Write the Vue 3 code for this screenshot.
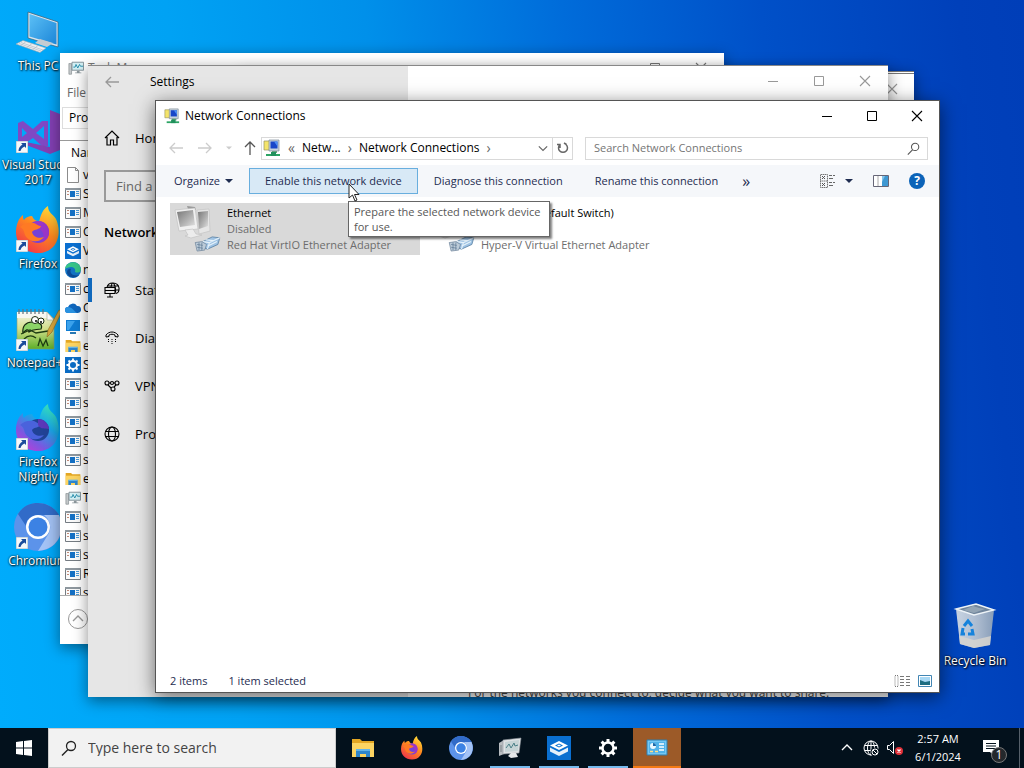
<template>
  <div class="screen">
    <svg class="sprite" aria-hidden="true">
      <defs>
        <linearGradient id="fire" x1="0.8" y1="0" x2="0.2" y2="1">
          <stop offset="0" stop-color="#ffe03a" />
          <stop offset="0.45" stop-color="#ff8a1e" />
          <stop offset="1" stop-color="#f0304c" />
        </linearGradient>
        <linearGradient id="night" x1="0.9" y1="0" x2="0.2" y2="1">
          <stop offset="0" stop-color="#3ff0b0" />
          <stop offset="0.4" stop-color="#18a8e8" />
          <stop offset="0.75" stop-color="#7a58e0" />
          <stop offset="1" stop-color="#c03cd8" />
        </linearGradient>
        <linearGradient id="glass" x1="0" y1="0" x2="1" y2="1">
          <stop offset="0" stop-color="#5cc0f6" />
          <stop offset="1" stop-color="#1c86d8" />
        </linearGradient>
        <linearGradient id="bin" x1="0" y1="0" x2="1" y2="0">
          <stop offset="0" stop-color="#d4dde6" />
          <stop offset="0.6" stop-color="#b2bfce" />
          <stop offset="1" stop-color="#8fa2b8" />
        </linearGradient>
        <linearGradient id="grass" x1="0" y1="0" x2="0" y2="1">
          <stop offset="0" stop-color="#f4f4ea" />
          <stop offset="0.45" stop-color="#d4e08c" />
          <stop offset="1" stop-color="#5cae28" />
        </linearGradient>
        <linearGradient id="greyscreen" x1="0" y1="0" x2="1" y2="1">
          <stop offset="0" stop-color="#777" />
          <stop offset="0.6" stop-color="#b4b4b4" />
          <stop offset="1" stop-color="#e2e2e2" />
        </linearGradient>
      </defs>

      <symbol id="i-pc" viewBox="0 0 48 48">
        <path d="M14 4 44 14v25L14 30z" fill="#d6e4ee" />
        <path d="M14 4 44 14v25L14 30z" fill="none" stroke="#3d5b70" stroke-width=".7" />
        <path d="M15.500 6 42.500 15v21.500L15.500 28.500z" fill="url(#glass)" />
        <path d="M26 31l13 4-6 4-12-4z" fill="#c4ccd2" />
        <path d="M9 32.500 32 40l-6 4.500L2 36z" fill="#eceff2" stroke="#9aa6ae" stroke-width=".6" />
        <path d="M7 34.500l22 7.500M5 35.500l22 7.500M12 33.500l-5 4M18 35.500l-5 4M24 37.500l-5 4" stroke="#b4bcc4" stroke-width=".7" />
      </symbol>
      <symbol id="i-vs" viewBox="0 0 48 48">
        <path d="M4 16l5-2 10 8 9-8h6v25h-6l-9-8-10 7-5-2zm4 5v9l5-4zm14 5 8 6V19z" fill="#7f49c4" />
        <path d="M36 3l10 4v36l-10 4-24-9v-3l24 5z" fill="#8340b4" />
      </symbol>
      <symbol id="i-firefox" viewBox="0 0 48 48">
        <path d="M24 47C11 47 2 38 2 26 2 18 5 12 9 9c0 2 0 4 1 5 2-3 5-4 8-4 1 1 1 3 3 4l4 2c2-8 4-13 9-16 0 7 5 8 8 13 7 16 0 34-18 34z" fill="url(#fire)" />
        <circle cx="24" cy="26" r="11" fill="#7442d8" />
        <path d="M24 15c7 0 11 5 11 11s-3 9-8 10c4-5 3-11-2-13-4-1-6 2-10 0 2-5 5-8 9-8z" fill="#9a36c8" />
        <path d="M6 21c4-4 9-5 14-4 3 1 4 3 7 3-1 4-7 3-9 6 1 5 7 7 12 5-4 6-15 6-19-2-1-3-1-6-5-8z" fill="#ff7a24" />
      </symbol>
      <symbol id="i-nightly" viewBox="0 0 48 48">
        <path d="M24 47C11 47 2 38 2 26 2 18 5 12 9 9c0 2 0 4 1 5 2-3 5-4 8-4 1 1 1 3 3 4l4 2c2-8 4-13 9-16 0 7 5 8 8 13 7 16 0 34-18 34z" fill="url(#night)" />
        <circle cx="24" cy="26" r="11" fill="#214296" />
        <path d="M6 21c4-4 9-5 14-4 3 1 4 3 7 3-1 4-7 3-9 6 1 5 7 7 12 5-4 6-15 6-19-2-1-3-1-6-5-8z" fill="#4a62dc" />
        <path d="M24 15c6 0 11 5 11 10-4-1-8 1-11-4z" fill="#5a38b8" />
      </symbol>
      <symbol id="i-npp" viewBox="0 0 48 48">
        <path d="M3 7h30l7 7v30H3z" fill="url(#grass)" stroke="#8a9a78" stroke-width=".6" />
        <path d="M3 7h30l1 6H3z" fill="#f8f8f2" />
        <path d="M5 4v5M9 4v5M13 4v5M17 4v5M21 4v5M25 4v5M29 4v5" stroke="#66707a" stroke-width="1.200" />
        <path d="M33 7v8h7z" fill="#fff" stroke="#a0a890" stroke-width=".6" />
        <path d="M9 28c-1-7 3-11 9-11 8 0 11 3 9 7-6 1-8 0-12 3-1-4-3-2-6 1z" fill="#8cd468" stroke="#182a10" stroke-width="1.200" />
        <circle cx="21" cy="15" r="3.500" fill="#fff" stroke="#182a10" />
        <circle cx="27" cy="16" r="3" fill="#fff" stroke="#182a10" />
        <circle cx="22" cy="16" r="1" /><circle cx="27" cy="17" r="1" />
        <path d="M7 29l9-4 6 3 12-2M10 34c4-4 8-4 12-1M24 41l2-7 3 7 3-6 2 6" fill="none" stroke="#1d3b12" stroke-width="1.300" />
        <path d="M48 6 38 27l-5 5 1-7L45 5z" fill="#d8a83c" stroke="#8c6a20" stroke-width=".6" />
      </symbol>
      <symbol id="i-chromium" viewBox="0 0 48 48">
        <circle cx="24" cy="24" r="24" fill="#5c93ea" />
        <path d="M24 0c9 0 17 5 21 12H24C17 12 12 17 12 23L4 11C8 4 15 0 24 0z" fill="#316bc8" />
        <path d="M45 12c6 14 1 34-21 36l11-18c3-7 0-14-5-18z" fill="#a4c3f6" />
        <circle cx="24" cy="24" r="12" fill="#fff" />
        <circle cx="24" cy="24" r="9.500" fill="#3c82e4" />
      </symbol>
      <symbol id="i-shortcut" viewBox="0 0 12 12">
        <path d="M0 0h12v12H0z" fill="#f4f8fa" stroke="#a8b8c0" />
        <path d="M5 2h5v5L8.500 5.500C6 7 5 8 4.500 10H2.500C2.500 7 4 5 6.500 3.500z" fill="#1a4c9c" />
      </symbol>
      <symbol id="i-bin" viewBox="0 0 48 48">
        <path d="M5 8 25 3l18 6-4 35-16 3-14-4z" fill="url(#bin)" opacity=".95" />
        <path d="M5 8 25 3l18 6-20 5z" fill="#70859c" stroke="#eef4f8" stroke-width="1.400" />
        <path d="M12 9l10-4 6 2 6 1-11 4z" fill="#93a4b4" />
        <path d="M8 35l15 4 17-4-1 9-16 3-14-4z" fill="#d8d6d0" opacity=".8" />
        <path d="M13 25l4-5 4 5M21 28l1 5h-5M14 33h-3l1-6" fill="none" stroke="#1683dc" stroke-width="3" />
      </symbol>

      <symbol id="i-app" viewBox="0 0 16 16">
        <path d="M.5 2.500h15v11H.5z" fill="#fafafa" stroke="#747b82" />
        <path d="M0 2h16v2H0z" fill="#8e979e" />
        <path d="M2 5h2v1H2zM2 8h2v1H2z" fill="#c08a78" />
        <path d="M5 5h5v6H5z" fill="#1470c4" />
        <path d="M11 5.500h3M11 7.500h3M11 9.500h3" stroke="#4a9ad8" />
      </symbol>
      <symbol id="i-file" viewBox="0 0 16 16">
        <path d="M2.500 .5h8l3 3v12h-11z" fill="#fff" stroke="#8c8c8c" /><path d="M10.500 .5v3h3" fill="none" stroke="#8c8c8c" />
      </symbol>
      <symbol id="i-box" viewBox="0 0 24 24">
        <path d="M0 0h24v24H0z" fill="#0a6fd0" />
        <path d="M12 5l9 4.500-9 4.500-9-4.500z" fill="#fff" />
        <path d="M3 11.500l9 4.500 9-4.500v4L12 20l-9-4.500z" fill="#e6f0fa" />
        <path d="M8 9.500 12 7.500l4 2-4 2z" fill="#0a6fd0" /><path d="M10 9.500l2-1 2 1-2 1z" fill="#fff" />
      </symbol>
      <symbol id="i-edge" viewBox="0 0 16 16">
        <circle cx="8" cy="8" r="8" fill="#1474c4" />
        <path d="M0 7c1-8 15-10 16 1-1 3-4 3-6 2 1-3-1-5-4-5-2 0-5 1-6 2z" fill="#38c488" />
        <path d="M6 7c-2 4 2 8 8 6-3 4-12 3-12-3 0-3 3-4 4-3z" fill="#0c4a94" />
      </symbol>
      <symbol id="i-cloud" viewBox="0 0 16 16">
        <path d="M3 13a3 3 0 0 1 0-6 5 5 0 0 1 9-1 3.500 3.500 0 0 1 1 7z" fill="#1066bc" /><path d="M3 13a3 3 0 0 1 0-6c4 0 6 4 9 6z" fill="#2a92e0" />
      </symbol>
      <symbol id="i-monitor" viewBox="0 0 16 16">
        <path d="M1 1h14v11H1z" fill="#0f7cd2" /><path d="M2 2h8L4 11H2z" fill="#3ba2ec" /><path d="M5 13h6v2H5z" fill="#2878b4" />
      </symbol>
      <symbol id="i-folder" viewBox="0 0 24 20">
        <path d="M1 1h8l2 2h12v16H1z" fill="#e3a623" />
        <path d="M1 5h22v14H1z" fill="#fcd462" />
        <path d="M5 19v-7h14v7h-4v-3H9v3z" fill="#2f86cc" /><path d="M5 11h14v2H5z" fill="#63b4ea" />
      </symbol>
      <symbol id="i-gearbox" viewBox="0 0 16 16">
        <path d="M0 0h16v16H0z" fill="#0a6cc4" />
        <circle cx="8" cy="8" r="4" fill="none" stroke="#fff" stroke-width="2" />
        <path d="M8 1.500V4M8 12v2.500M1.500 8H4M12 8h2.500M3.500 3.500l1.500 1.500M11 11l1.500 1.500M3.500 12.500 5 11M11 5l1.500-1.500" stroke="#fff" stroke-width="1.800" />
      </symbol>
      <symbol id="i-tm" viewBox="0 0 18 16">
        <path d="M1 3h3v12H1z" fill="#c4c8ca" stroke="#7c8488" stroke-width=".7" />
        <path d="M4.500 1.500h13v9h-13z" fill="#d4f0f4" stroke="#7c8a92" />
        <path d="M6 7h2l1-3 2 4 2-4 1 2h3" fill="none" stroke="#1e88a8" />
        <path d="M10 11h3v2h2v1H8v-1h2z" fill="#8c979c" />
      </symbol>
      <symbol id="i-taskmon" viewBox="0 0 24 22">
        <path d="M1 6l5-3v14l-5 2z" fill="#b8bcc0" />
        <path d="M3 8v7" stroke="#7c8488" />
        <path d="M5 3l18-2-2 15L5 17z" fill="#dfe2e4" stroke="#8e969c" stroke-width=".6" />
        <path d="M7 5l14-2-1 11L7 15z" fill="#c6d4d6" />
        <path d="M8 11l3-4 2 4 3-5 1 3 3-1" fill="none" stroke="#4c8088" />
        <path d="M13 16h5l2 4-7 1-3-2z" fill="#e6e8ea" />
      </symbol>
      <symbol id="i-net" viewBox="0 0 18 18">
        <path d="M1 2h7v9H1z" fill="#f4e46a" stroke="#96925c" stroke-width=".7" />
        <path d="M6 1h10v11H6z" fill="#c6d2dc" stroke="#7d8a98" stroke-width=".7" />
        <path d="M7.500 2.500h7v7h-7z" fill="#1846c8" /><path d="M11 2.500h3.500v5z" fill="#4d90f4" />
        <path d="M9 12h5v2H9z" fill="#6aa080" /><path d="M3 15h14v2H3z" fill="#2ca464" /><path d="M8 13h5v4H8z" fill="#20905c" />
      </symbol>
      <symbol id="i-adapter" viewBox="0 0 48 48">
        <path d="M24 5l12-1 1 22-11 3z" fill="#e6e6e6" stroke="#c0c0c0" stroke-width=".6" /><path d="M25 7l10-1v15l-9 3z" fill="url(#greyscreen)" />
        <path d="M14 1l8 1 1 3-8-1z" fill="#999" />
        <path d="M2 5l20-2 3 21-19 2z" fill="#f0f0f0" stroke="#bcbcbc" stroke-width=".6" />
        <path d="M4 7l16-2 2 15-15 2z" fill="url(#greyscreen)" />
        <path d="M12 25l8-1 3 5 6 1-11 3-6-2 3-1z" fill="#ececec" stroke="#b8b8b8" stroke-width=".5" />
        <use href="#i-plug" x="21" y="30" width="27" height="17" />
      </symbol>
      <symbol id="i-plug" viewBox="0 0 28 18">
        <path d="M9 7 19 2l8 1-2 7-11 5-6-2z" fill="#9fc3e4" stroke="#527a9e" stroke-width=".8" />
        <path d="M9 7l7 1 11-5M16 8l-2 7M12 5l8 1M14 12l10-5" fill="none" stroke="#e6f2fa" stroke-width="1.200" />
        <path d="M1 8l7-1 5 3-2 6-8 1z" fill="#bccbd8" stroke="#657c94" stroke-width=".7" /><path d="M3 10l6 1M3 13l6 1M5 8v8M8 8v8" stroke="#5a7590" stroke-width=".7" />
      </symbol>

      <symbol id="i-back" viewBox="0 0 16 16"><path d="M15 8H2M7 3L2 8l5 5" fill="none" stroke="currentColor" stroke-width="1.300" /></symbol>
      <symbol id="i-home" viewBox="0 0 16 16"><path d="M1 8l7-7 7 7M3 7v8h3.500v-5h3v5H13V7" fill="none" stroke="currentColor" stroke-width="1.200" /></symbol>
      <symbol id="i-status" viewBox="0 0 16 16"><path d="M3 5.500C4-.5 14-.5 15 6c.3 3-1 5-3 5.500M3.500 4h11M15 8h-3M7 5.500C7.500 2 8.500 1 9 1s3 3 2.500 9.500M1 5.500h10v6H1zM1 8.500h10M6 11.500v3M3 15h6" fill="none" stroke="currentColor" stroke-width="1.100" /></symbol>
      <symbol id="i-dial" viewBox="0 0 16 16"><path d="M2 7V5c3-4 9-4 12 0v2l-3-.5V5c-2-1-4-1-6 0v1.500z" fill="none" stroke="currentColor" /><path d="M4 9.500h1M7.500 9.500h1M11 9.500h1M4 11.500h1M7.500 11.500h1M11 11.500h1M7.500 13.500h1" stroke="currentColor" /></symbol>
      <symbol id="i-vpn" viewBox="0 0 16 16"><g fill="none" stroke="currentColor" stroke-width="1.100"><circle cx="3" cy="5" r="2" /><circle cx="13" cy="5" r="2" /><circle cx="9" cy="11" r="2" /><circle cx="8" cy="5" r="1.500" /><path d="M4 7l3 3M12 7l-2 2M5 5h1.500M9.500 5H11" /></g></symbol>
      <symbol id="i-globe" viewBox="0 0 16 16"><g fill="none" stroke="currentColor" stroke-width="1.100"><circle cx="8" cy="8" r="7" /><ellipse cx="8" cy="8" rx="3.500" ry="7" /><path d="M1.500 5.500h13M1.500 10.500h13" /></g></symbol>
      <symbol id="i-min" viewBox="0 0 12 12"><path d="M1 6.500h10" stroke="currentColor" /></symbol>
      <symbol id="i-max" viewBox="0 0 12 12"><path d="M1.500 1.500h9v9h-9z" fill="none" stroke="currentColor" /></symbol>
      <symbol id="i-close" viewBox="0 0 12 12"><path d="M1 1l10 10M11 1L1 11" stroke="currentColor" stroke-width="1.100" /></symbol>
      <symbol id="i-find" viewBox="0 0 16 16"><circle cx="10" cy="6" r="4.500" fill="none" stroke="currentColor" stroke-width="1.300" /><path d="M7 9.500 1 15.500" stroke="currentColor" stroke-width="1.400" /></symbol>
      <symbol id="i-chevron" viewBox="0 0 12 12"><path d="M1 8l5-5 5 5" fill="none" stroke="currentColor" stroke-width="1.400" /></symbol>
      <symbol id="i-caret" viewBox="0 0 8 8"><path d="M0 2h8L4 6z" fill="currentColor" /></symbol>
    </svg>

    <main class="desktop">
      <ul class="desktop__icons">
        <li v-for="icon in desktopIcons" :key="icon.label">
          <div class="desktop__picture">
            <svg><use :href="icon.href" /></svg>
            <svg v-if="icon.link" class="desktop__link"><use href="#i-shortcut" /></svg>
          </div>
          <span>{{ icon.label }}</span>
        </li>
      </ul>
      <div class="desktop__bin">
        <svg><use href="#i-bin" /></svg>
        <span>Recycle Bin</span>
      </div>

      <section class="window taskmgr">
        <header class="taskmgr__title">
          <svg><use href="#i-tm" /></svg>
          <span>Task Manager</span>
          <div class="controls">
            <button aria-label="Minimize"><svg><use href="#i-min" /></svg></button>
            <button aria-label="Maximize"><svg><use href="#i-max" /></svg></button>
            <button aria-label="Close"><svg><use href="#i-close" /></svg></button>
          </div>
        </header>
        <nav class="taskmgr__menu"><a href="#">File</a></nav>
        <div class="taskmgr__tabs"><button>Processes</button></div>
        <div class="taskmgr__list">
          <table>
            <thead><tr><th colspan="2">Name</th></tr></thead>
            <tbody>
              <tr v-for="(row, i) in processes" :key="i">
                <td><svg><use :href="'#i-' + row[0]" /></svg></td>
                <td>{{ row[1] }}</td>
              </tr>
            </tbody>
          </table>
        </div>
        <footer><button class="round" aria-label="Fewer details"><svg><use href="#i-chevron" /></svg></button></footer>
      </section>

      <section class="window behind">
        <button aria-label="Close"><svg><use href="#i-close" /></svg></button>
      </section>

      <section class="window settings">
        <aside>
          <header><svg><use href="#i-back" /></svg><span>Settings</span></header>
          <a href="#" class="settings__home"><svg><use href="#i-home" /></svg>Home</a>
          <input type="text" placeholder="Find a setting" aria-label="Find a setting" />
          <h2>Network &amp; Internet</h2>
          <nav>
            <a v-for="(link, i) in settingsLinks" :key="link.label" href="#" :class="{ active: i === 0 }">
              <svg><use :href="link.href" /></svg>{{ link.label }}
            </a>
          </nav>
        </aside>
        <div class="settings__page">
          <div class="controls">
            <button aria-label="Minimize"><svg><use href="#i-min" /></svg></button>
            <button aria-label="Maximize"><svg><use href="#i-max" /></svg></button>
            <button aria-label="Close"><svg><use href="#i-close" /></svg></button>
          </div>
          <p>For the networks you connect to, decide what you want to share.</p>
        </div>
      </section>

      <section class="window network">
        <header class="network__title">
          <svg><use href="#i-net" /></svg>
          <h1>Network Connections</h1>
          <div class="controls">
            <button aria-label="Minimize"><svg><use href="#i-min" /></svg></button>
            <button aria-label="Maximize"><svg><use href="#i-max" /></svg></button>
            <button aria-label="Close"><svg><use href="#i-close" /></svg></button>
          </div>
        </header>

        <div class="network__nav">
          <button class="faint" aria-label="Back"><svg><use href="#i-back" /></svg></button>
          <button class="faint" aria-label="Forward"><svg class="flip"><use href="#i-back" /></svg></button>
          <button class="faint tiny" aria-label="Recent"><svg><use href="#i-caret" /></svg></button>
          <button class="up" aria-label="Up"><svg><use href="#i-back" /></svg></button>
          <div class="address">
            <svg class="address__icon"><use href="#i-net" /></svg>
            <span>«</span>
            <a href="#">Netw...</a>
            <span>›</span>
            <a href="#">Network Connections</a>
            <span>›</span>
            <button class="address__drop" aria-label="Previous locations"><svg><use href="#i-chevron" /></svg></button>
            <button class="address__refresh" aria-label="Refresh">
              <svg viewBox="0 0 12 12"><path d="M3 2.500a4.500 4.500 0 1 0 6 0M3 6V2.500H0M9.500 2.500 7 1" fill="none" stroke="#666" stroke-width="1.500" /></svg>
            </button>
          </div>
          <label class="search">
            <input type="text" placeholder="Search Network Connections" aria-label="Search Network Connections" />
            <svg><use href="#i-find" /></svg>
          </label>
        </div>

        <div class="network__tools">
          <button class="organize">Organize <svg><use href="#i-caret" /></svg></button>
          <button class="hover">Enable this network device</button>
          <button>Diagnose this connection</button>
          <button>Rename this connection</button>
          <button class="more">»</button>
          <div class="network__views">
            <button aria-label="Change view">
              <svg class="view" viewBox="0 0 16 16"><path d="M1.500 1.500h7v13h-7zM1 8h8" fill="none" stroke="#777" stroke-dasharray="1.500 .5" /><path d="M3 3l3 3M6 3 3 6M3 10l3 3M6 10l-3 3" stroke="#555" /><path d="M10 2.500h3M14 2.500h2M10 5.500h4M10 9.500h3M14 9.500h2M10 12.500h4" stroke="#666" /></svg>
              <svg class="caret"><use href="#i-caret" /></svg>
            </button>
            <button aria-label="Preview pane">
              <svg class="view" viewBox="0 0 16 12"><path d="M.5.5h15v11H.5z" fill="#fff" stroke="#667" /><path d="M5 1v10" stroke="#aaa" /><path d="M9 1h6v10H9z" fill="#3f98d2" /><path d="M9 1h3L9 7z" fill="#84c4ea" /></svg>
            </button>
            <button class="help" aria-label="Help">?</button>
          </div>
        </div>

        <ul class="network__items">
          <li class="selected">
            <svg><use href="#i-adapter" /></svg>
            <div>
              <strong>Ethernet</strong>
              <span>Disabled</span>
              <span>Red Hat VirtIO Ethernet Adapter</span>
            </div>
          </li>
          <li>
            <svg><use href="#i-adapter" /></svg>
            <div>
              <strong>vEthernet (Default Switch)</strong>
              <span>Enabled</span>
              <span>Hyper-V Virtual Ethernet Adapter</span>
            </div>
          </li>
        </ul>

        <footer class="network__status">
          <span>2 items</span>
          <span>1 item selected</span>
          <svg class="details" viewBox="0 0 16 12"><path d="M1 .5h3v11H1z" fill="none" stroke="#777" stroke-dasharray="1 1" /><path d="M6 1.500h4M12 1.500h4M6 4.500h4M12 4.500h4M6 7.500h4M12 7.500h4M6 10.500h4M12 10.500h4" stroke="#777" /></svg>
          <svg viewBox="0 0 14 12"><path d="M.5.5h13v11H.5z" fill="#fff" stroke="#4286b4" /><path d="M2 2h10v8H2z" fill="#a8d8f4" /><path d="M2 5l5 2 5-1v4H2z" fill="#1d6c80" /></svg>
        </footer>
      </section>

      <div class="tooltip" role="tooltip">Prepare the selected network device for use.</div>
      <svg class="cursor" viewBox="0 0 12 19"><path d="M1 1v14l3.500-3 2.500 6 2-1-2.500-5.500H11z" fill="#fff" stroke="#222" /></svg>
    </main>

    <footer class="taskbar">
      <button class="taskbar__start" aria-label="Start">
        <svg viewBox="0 0 16 16"><path d="M0 2l7-1v6.500H0zM8 1l8-1v7.500H8zM0 8.500h7V15l-7-1zM8 8.500h8V16l-8-1z" fill="#fff" /></svg>
      </button>
      <label class="taskbar__search">
        <svg><use href="#i-find" /></svg>
        <input type="text" placeholder="Type here to search" aria-label="Type here to search" />
      </label>
      <div class="taskbar__apps">
        <button v-for="app in apps" :key="app.name" :class="app.state" :aria-label="app.name">
          <svg v-if="app.href"><use :href="app.href" /></svg>
          <svg v-else-if="app.name === 'Settings'" viewBox="0 0 24 24"><circle cx="12" cy="12" r="5.500" fill="none" stroke="#fff" stroke-width="2.500" /><path d="M12 3v4M12 17v4M3 12h4M17 12h4M5.600 5.600l2.800 2.800M15.600 15.600l2.800 2.800M5.600 18.400l2.800-2.800M15.600 8.400l2.800-2.800" stroke="#fff" stroke-width="3" /></svg>
          <svg v-else viewBox="0 0 24 24"><path d="M2 4h20v15H2z" fill="#74c8f4" stroke="#2e7fae" /><path d="M4 6h16v11H4z" fill="#4fb2ea" /><circle cx="8" cy="10" r="3" fill="#e9f8ff" /><path d="M8 10V7a3 3 0 0 1 3 3z" fill="#1b68a8" /><path d="M14 8h5M14 11h5M14 14h5" stroke="#fff" stroke-width="1.500" /><path d="M5 15.500h3M10 15.500h3" stroke="#ffe08a" stroke-width="1.500" /></svg>
        </button>
      </div>
      <div class="tray">
        <svg class="tray__chevron"><use href="#i-chevron" /></svg>
        <svg viewBox="0 0 16 16"><g fill="none" stroke="#fff"><circle cx="8" cy="8" r="7" /><ellipse cx="8" cy="8" rx="3.500" ry="7" /><path d="M1.500 5.500h13M1.500 10.500h13M8 1v14" /></g><circle cx="12" cy="12" r="4.500" fill="#03111c" /><circle cx="12" cy="12" r="3" fill="none" stroke="#fff" /><path d="M10 10l4 4" stroke="#fff" /></svg>
        <svg viewBox="0 0 16 16"><path d="M.5 5.500h2l4-4v12l-4-4h-2z" fill="none" stroke="#fff" /><circle cx="12" cy="11" r="4" fill="#e03038" /><path d="M10.500 9.500l3 3M13.500 9.500l-3 3" stroke="#fff" stroke-width="1.300" /></svg>
        <time><span>2:57 AM</span><span>6/1/2024</span></time>
        <div class="tray__notes">
          <svg viewBox="0 0 16 16"><path d="M0 0h16v12h-5v4l-4-4H0z" fill="#fff" /><path d="M3 3.500h10M3 6h10M3 8.500h10" stroke="#06141e" /></svg>
          <span>1</span>
        </div>
      </div>
    </footer>
  </div>
</template>

<script setup>
const desktopIcons = [
  { label: "This PC", href: "#i-pc", link: false },
  { label: "Visual Studio 2017", href: "#i-vs", link: true },
  { label: "Firefox", href: "#i-firefox", link: true },
  { label: "Notepad++", href: "#i-npp", link: true },
  { label: "Firefox Nightly", href: "#i-nightly", link: true },
  { label: "Chromium", href: "#i-chromium", link: true },
];

const processes = [
  ["file", "v"],
  ["app", "S"],
  ["app", "M"],
  ["app", "C"],
  ["box", "V"],
  ["edge", "n"],
  ["app", "c"],
  ["cloud", "C"],
  ["monitor", "P"],
  ["folder", "e"],
  ["gearbox", "S"],
  ["app", "s"],
  ["app", "s"],
  ["app", "S"],
  ["app", "S"],
  ["app", "s"],
  ["folder", "e"],
  ["tm", "T"],
  ["app", "v"],
  ["app", "s"],
  ["app", "s"],
  ["app", "R"],
  ["app", "s"],
];

const settingsLinks = [
  { label: "Status", href: "#i-status" },
  { label: "Dial-up", href: "#i-dial" },
  { label: "VPN", href: "#i-vpn" },
  { label: "Proxy", href: "#i-globe" },
];

const apps = [
  { name: "File Explorer", href: "#i-folder" },
  { name: "Firefox", href: "#i-firefox" },
  { name: "Chromium", href: "#i-chromium" },
  { name: "Task Manager", href: "#i-taskmon", state: "open" },
  { name: "VirtualBox", href: "#i-box", state: "open" },
  { name: "Settings", state: "open" },
  { name: "Network Connections", state: "active" },
];
</script>

<style>
body {
  margin: 0;
}
</style>

<style scoped>
* {
  box-sizing: border-box;
}
.screen {
  display: flex;
  flex-direction: column;
  min-height: 100vh;
  font-family: "Open Sans", "Noto Sans", sans-serif;
  font-size: 12px;
  line-height: 16px;
  color: #000;
}
.sprite {
  position: absolute;
  width: 0;
  height: 0;
}
svg {
  display: block;
  flex: none;
  width: 16px;
  height: 16px;
}
ul,
h1,
h2,
p {
  margin: 0;
  padding: 0;
  list-style: none;
  font-size: 12px;
  font-weight: normal;
}
button,
input {
  font: inherit;
  color: inherit;
  border: 0;
  padding: 0;
  background: none;
}
a {
  color: inherit;
  text-decoration: none;
}

/* desktop */
.desktop {
  position: relative;
  flex: 1;
  overflow: hidden;
  background: linear-gradient(
    84deg,
    #00acfc 0%,
    #00a2f4 22%,
    #0090ea 40%,
    #006cda 58%,
    #0050c8 76%,
    #0040ba 94%,
    #003eb8 100%
  );
}
.desktop__icons {
  width: 76px;
  padding-top: 8px;
}
.desktop__icons li {
  display: flex;
  flex-direction: column;
  align-items: center;
  height: 99px;
  gap: 2px;
}
.desktop__icons span,
.desktop__bin span {
  color: #fff;
  text-align: center;
  line-height: 15px;
  text-shadow: 1px 1px 2px #000, 0 0 2px #000;
}
.desktop__picture {
  position: relative;
  width: 48px;
  height: 48px;
}
.desktop__picture svg,
.desktop__bin svg {
  width: 48px;
  height: 48px;
}
.desktop__picture .desktop__link {
  position: absolute;
  left: 2px;
  bottom: 2px;
  width: 12px;
  height: 12px;
}
.desktop__bin {
  position: absolute;
  right: 11px;
  bottom: 60px;
  width: 76px;
  display: flex;
  flex-direction: column;
  align-items: center;
  gap: 4px;
  white-space: nowrap;
}

/* windows */
.window {
  position: absolute;
  display: flex;
  background: #fff;
  box-shadow: 0 4px 14px rgba(0, 0, 0, 0.45);
}
.controls {
  display: flex;
  margin-left: auto;
}
.controls button {
  display: grid;
  place-items: center;
  width: 46px;
  height: 30px;
}
.controls svg,
.behind svg {
  width: 12px;
  height: 12px;
}

.taskmgr {
  top: 53px;
  left: 60px;
  right: 300px;
  bottom: 84px;
  flex-direction: column;
}
.taskmgr__title {
  display: flex;
  align-items: center;
  gap: 4px;
  height: 30px;
  padding-left: 8px;
  color: #777;
}
.taskmgr__menu {
  padding: 2px 7px 4px;
  color: #666;
}
.taskmgr__tabs {
  height: 36px;
  padding: 2px;
  border-bottom: 1px solid #999;
}
.taskmgr__tabs button {
  height: 22px;
  padding: 0 6px;
  border: 1px solid #ddd;
}
.taskmgr__list {
  flex: 1;
  min-height: 0;
  overflow: hidden;
}
.taskmgr table {
  width: 100%;
  border-collapse: collapse;
}
.taskmgr th {
  height: 24px;
  padding: 0 11px;
  font-weight: normal;
  text-align: left;
}
.taskmgr td {
  width: 23px;
  height: 19px;
  padding: 0 2px 0 5px;
}
.taskmgr td + td {
  width: auto;
  padding: 0;
}
.taskmgr footer {
  height: 49px;
  padding: 13px 8px;
  border-top: 1px solid #aaa;
}
.round {
  display: grid;
  place-items: center;
  width: 20px;
  height: 20px;
  border: 1px solid #999;
  border-radius: 50%;
  color: #999;
}
.round svg {
  width: 12px;
  height: 12px;
}

.behind {
  top: 71px;
  right: 110px;
  bottom: 140px;
  left: 240px;
  justify-content: flex-end;
  align-items: flex-start;
  padding: 9px 16px;
  border-top: 3px double #777;
  color: #999;
}

.settings {
  top: 65px;
  left: 88px;
  right: 136px;
  bottom: 31px;
  overflow: hidden;
  border-top: 1px solid #888;
}
.settings aside {
  flex: none;
  width: 320px;
  background: #e6e6e6;
  font-size: 13px;
}
.settings header {
  display: flex;
  align-items: center;
  gap: 30px;
  height: 32px;
  padding-left: 16px;
  font-size: 12px;
}
.settings header svg {
  color: #999;
}
.settings__home,
.settings nav a {
  display: flex;
  align-items: center;
  gap: 15px;
  height: 48px;
  padding-left: 16px;
}
.settings__home {
  margin: 16px 0 8px;
}
.settings input {
  display: block;
  width: 288px;
  height: 32px;
  margin-left: 16px;
  padding: 0 10px;
  border: 2px solid #999;
}
.settings input::placeholder {
  color: #666;
  opacity: 1;
}
.settings h2 {
  padding: 20px 16px 24px;
  font-size: 13px;
  line-height: 20px;
  font-weight: 600;
}
.settings nav a {
  position: relative;
}
.settings nav .active::before {
  content: "";
  position: absolute;
  left: 0;
  top: 12px;
  width: 4px;
  height: 24px;
  background: #0f68bc;
}
.settings__page {
  flex: 1;
  min-width: 0;
  display: flex;
  flex-direction: column;
  justify-content: space-between;
  color: #999;
}
.settings__page p {
  height: 16px;
  padding-left: 60px;
  line-height: 24px;
  color: #444;
  white-space: nowrap;
}

.network {
  top: 100px;
  left: 155px;
  right: 84px;
  bottom: 35px;
  flex-direction: column;
  border: 1px solid #555;
  box-shadow: 0 4px 18px rgba(0, 0, 0, 0.55);
}
.network__title {
  display: flex;
  align-items: center;
  gap: 5px;
  height: 30px;
  padding-left: 8px;
}
.network__title .controls button {
  width: 45px;
}
.network__nav {
  display: flex;
  align-items: center;
  height: 34px;
  padding: 0 11px 0 5px;
}
.network__nav > button {
  display: grid;
  place-items: center;
  width: 29px;
  height: 22px;
}
.network__nav .faint {
  color: #ccc;
}
.network__nav .tiny {
  width: 20px;
}
.network__nav .tiny svg {
  width: 6px;
  height: 6px;
}
.flip {
  transform: rotate(180deg);
}
.network__nav .up {
  width: 22px;
}
.up svg {
  color: #555;
  transform: rotate(90deg);
}
.address,
.search {
  display: flex;
  align-items: center;
  height: 23px;
  border: 1px solid #d9d9d9;
}
.address {
  flex: 312 1 0;
  gap: 7px;
  white-space: nowrap;
}
.address span {
  color: #666;
  font-size: 14px;
}
.address__icon {
  width: 18px;
  height: 18px;
  margin-left: 1px;
}
.address button {
  display: grid;
  place-items: center;
  height: 22px;
}
.address button svg {
  width: 10px;
  height: 10px;
}
.address__drop {
  margin-left: auto;
  color: #666;
}
.address__drop svg {
  transform: rotate(180deg);
}
.address .address__refresh {
  width: 20px;
  margin-left: -3px;
  border-left: 1px solid #d9d9d9;
}
.address .address__refresh svg {
  width: 12px;
  height: 12px;
}
.search {
  flex: 328 1 0;
  min-width: 0;
  margin-left: 12px;
  padding: 0 7px 0 8px;
}
.search input {
  flex: 1;
  min-width: 0;
  font-size: 11px;
}
.search input::placeholder {
  color: #757575;
  opacity: 1;
}
.search svg {
  width: 13px;
  height: 13px;
  color: #555;
}
.network__tools {
  display: flex;
  align-items: center;
  height: 32px;
  padding: 0 14px 0 4px;
  background: #f5f7fa;
  color: #1e2c50;
  font-size: 11px;
  white-space: nowrap;
}
.network__tools > button {
  height: 26px;
  padding: 0 15px;
  border: 1px solid transparent;
}
.network__tools .organize {
  display: flex;
  align-items: center;
  gap: 5px;
  padding: 0 15px 0 13px;
}
.network__tools .organize svg,
.network__views .caret {
  width: 8px;
  height: 8px;
}
.network__tools .hover {
  border-color: #68aede;
  background: #d8e9f6;
}
.network__tools .more {
  padding: 0 7px;
  font-size: 16px;
}
.network__views {
  display: flex;
  align-items: center;
  gap: 20px;
  margin-left: auto;
}
.network__views button {
  display: flex;
  align-items: center;
  gap: 10px;
}
.network__views .help {
  justify-content: center;
  width: 16px;
  height: 16px;
  border-radius: 50%;
  background: #0b63b8;
  color: #fff;
  font-size: 12px;
  font-weight: bold;
}
.network__items {
  flex: 1;
  display: flex;
  align-items: flex-start;
  gap: 4px;
  padding: 6px 14px;
  font-size: 11px;
}
.network__items li {
  display: flex;
  gap: 6px;
  width: 250px;
  padding: 2px 0 2px 3px;
}
.network__items .selected {
  background: #d9d9d9;
}
.network__items svg {
  width: 48px;
  height: 48px;
}
.network__items li > div {
  display: flex;
  flex-direction: column;
  white-space: nowrap;
}
.network__items strong {
  font-weight: normal;
}
.network__items span {
  color: #6d6d6d;
}
.network__status {
  display: flex;
  align-items: center;
  gap: 21px;
  height: 22px;
  padding: 0 7px 0 14px;
  color: #1e2c50;
  font-size: 11px;
}
.network__status svg {
  width: 14px;
  height: 12px;
  margin-left: -13px;
}
.network__status .details {
  width: 16px;
  margin-left: auto;
}

.tooltip {
  position: absolute;
  left: 348px;
  top: 201px;
  width: 202px;
  padding: 2px 4px 2px 5px;
  border: 1px solid #666;
  background: #fff;
  box-shadow: 2px 2px 2px rgba(0, 0, 0, 0.5);
  color: #575757;
  font-size: 11px;
  line-height: 15px;
}
.cursor {
  position: absolute;
  left: 348px;
  top: 183px;
  width: 12px;
  height: 19px;
}

/* taskbar */
.taskbar {
  display: flex;
  height: 40px;
  background: #03111c;
  color: #fff;
}
.taskbar__start {
  display: grid;
  place-items: center;
  width: 48px;
}
.taskbar__search {
  display: flex;
  align-items: center;
  gap: 11px;
  width: 288px;
  padding: 0 12px;
  border: 1px solid #ccc;
  background: #f2f2f2;
  color: #222;
}
.taskbar__search input {
  min-width: 0;
  flex: 1;
  font-size: 14px;
}
.taskbar__search input::placeholder {
  color: #444;
  opacity: 1;
}
.taskbar__apps {
  display: flex;
  gap: 1px;
  margin-left: 3px;
}
.taskbar__apps button {
  position: relative;
  display: grid;
  place-items: center;
  width: 48px;
}
.taskbar__apps svg {
  width: 24px;
  height: 24px;
}
.taskbar__apps .open::after,
.taskbar__apps .active::after {
  content: "";
  position: absolute;
  left: 4px;
  right: 4px;
  bottom: 0;
  height: 2px;
  background: #76b9ed;
}
.taskbar__apps .active {
  background: #9c5a28;
}
.taskbar__apps .active::after {
  left: 0;
  right: 0;
  background: #f47a14;
}
.tray {
  display: flex;
  align-items: center;
  gap: 8px;
  margin-left: auto;
  margin-right: 4px;
  padding-right: 20px;
  border-right: 1px solid #56606a;
}
.tray__chevron {
  width: 12px;
  height: 12px;
  margin-right: 2px;
}
.tray time {
  display: flex;
  flex-direction: column;
  width: 50px;
  margin: 0 12px 0 2px;
  text-align: center;
  font-size: 11px;
  line-height: 18px;
}
.tray__notes {
  position: relative;
}
.tray__notes span {
  position: absolute;
  left: 8px;
  top: 7px;
  width: 16px;
  height: 16px;
  border: 1px solid #777;
  border-radius: 50%;
  background: #24282c;
  text-align: center;
  line-height: 14px;
}
</style>
